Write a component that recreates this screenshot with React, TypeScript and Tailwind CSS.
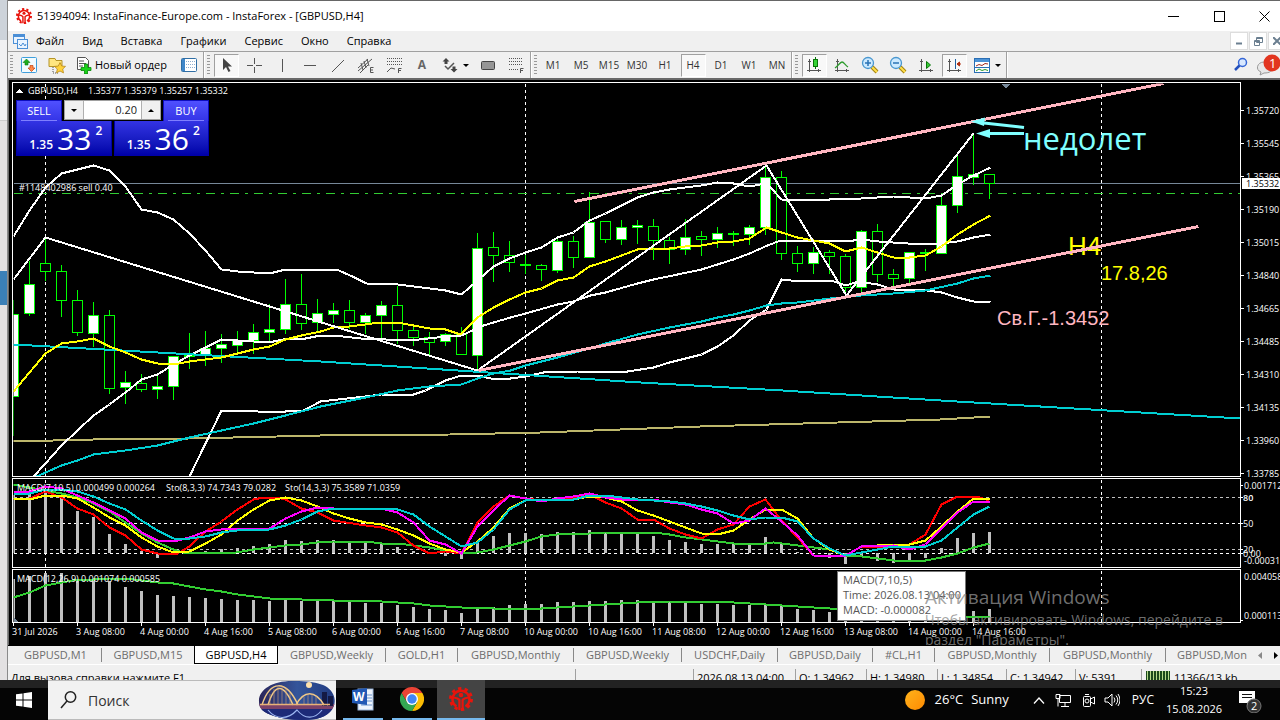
import React from "react";

type Pt = [number, number];

const UI = "font-['Open_Sans','Noto_Sans',sans-serif]";

/* open/close box top, bottom, wick high, low, style: 1 = filled, 0 = hollow */
const candles: [number, number, number, number, number][] = [
  [314, 396, 299, 435, 1], [284, 313, 260, 315, 1], [263, 271, 237, 280, 0], [271, 300, 264, 316, 0],
  [300, 332, 289, 335, 0], [315, 333, 301, 346, 1], [315, 388, 309, 393, 0], [382, 387, 370, 403, 1],
  [383, 389, 373, 391, 0], [386, 389, 375, 398, 1], [356, 386, 356, 399, 1], [355, 356, 332, 368, 0],
  [348, 354, 330, 365, 1], [344, 348, 333, 362, 1], [340, 345, 330, 353, 1], [332, 340, 323, 353, 1],
  [329, 332, 303, 340, 1], [304, 329, 278, 333, 1], [304, 323, 273, 329, 0], [313, 322, 298, 330, 1],
  [310, 314, 302, 322, 1], [310, 322, 299, 328, 0], [315, 322, 312, 333, 1], [305, 315, 300, 338, 1],
  [305, 330, 285, 343, 0], [330, 337, 325, 345, 0], [337, 342, 331, 354, 0], [334, 341, 332, 345, 1],
  [334, 354, 326, 354, 0], [248, 355, 232, 370, 1], [247, 255, 231, 281, 0], [255, 262, 240, 271, 0],
  [264, 265, 254, 273, 0], [265, 269, 263, 280, 0], [241, 270, 237, 272, 1], [241, 257, 235, 267, 0],
  [222, 257, 191, 257, 1], [221, 239, 220, 242, 0], [227, 239, 219, 244, 1], [225, 227, 219, 243, 1],
  [226, 240, 218, 259, 0], [240, 249, 236, 263, 0], [237, 249, 218, 254, 1], [236, 239, 230, 255, 0],
  [233, 239, 226, 247, 1], [233, 234, 230, 245, 0], [227, 234, 224, 244, 1], [177, 227, 165, 234, 1],
  [177, 253, 170, 259, 0], [253, 263, 245, 271, 0], [252, 263, 246, 273, 1], [252, 256, 249, 273, 0],
  [256, 287, 253, 295, 0], [231, 287, 229, 292, 1], [231, 274, 223, 281, 0], [274, 278, 268, 287, 0],
  [252, 278, 251, 282, 1], [252, 253, 248, 270, 0], [205, 253, 193, 253, 1], [176, 205, 154, 212, 1],
  [174, 177, 133, 184, 1], [174, 183, 174, 198, 0],
];

const upperBand: Pt[] = [[13, 236], [29, 210], [45, 187], [61, 173], [93, 165], [109, 170], [125, 186], [141, 209], [157, 212], [173, 219], [189, 233], [205, 250], [221, 269], [237, 271], [253, 272], [273, 272], [285, 269], [336, 269], [352, 276], [366, 283], [397, 284], [429, 288], [445, 290], [461, 294], [477, 280], [493, 266], [509, 258], [525, 252], [541, 247], [557, 237], [573, 232], [589, 220], [605, 213], [621, 205], [637, 197], [653, 192], [669, 189], [685, 187], [701, 185], [717, 182], [733, 183], [749, 186], [765, 183], [771, 188], [781, 199], [829, 199], [861, 198], [877, 197], [893, 196], [909, 197], [925, 198], [941, 195], [957, 184], [973, 175], [990, 167]];
const middleBand: Pt[] = [[33, 476], [45, 463], [61, 445], [93, 415], [109, 404], [125, 392], [141, 379], [157, 374], [173, 364], [189, 355], [221, 339], [253, 341], [273, 341], [287, 338], [305, 338], [320, 335], [333, 335], [360, 338], [410, 340], [445, 336], [461, 335], [483, 325], [510, 317], [525, 313], [557, 304], [573, 301], [590, 295], [605, 292], [637, 283], [653, 279], [701, 269], [733, 259], [749, 253], [767, 245], [780, 240], [853, 240], [861, 239], [878, 241], [907, 243], [941, 243], [957, 241], [973, 237], [990, 234]];
const lowerBand: Pt[] = [[189, 476], [221, 410], [250, 410], [257, 411], [285, 411], [303, 410], [320, 401], [365, 396], [381, 394], [413, 394], [425, 390], [445, 380], [461, 375], [478, 375], [490, 378], [510, 378], [525, 376], [543, 372], [577, 371], [627, 371], [653, 367], [669, 362], [701, 354], [717, 346], [733, 335], [749, 320], [766, 309], [781, 279], [790, 280], [830, 280], [846, 285], [857, 281], [877, 284], [893, 289], [927, 290], [941, 292], [957, 297], [973, 301], [990, 302]];
const zigzag: Pt[] = [[13, 279], [45, 237], [477, 370], [766, 165], [846, 295], [973, 133]];
const yellowMa: Pt[] = [[13, 391], [45, 353], [61, 343], [77, 341], [93, 338], [109, 346], [125, 352], [141, 359], [157, 363], [173, 364], [189, 361], [221, 357], [237, 353], [253, 349], [269, 346], [285, 339], [301, 335], [320, 331], [333, 327], [349, 326], [365, 324], [378, 322], [397, 322], [429, 328], [445, 329], [460, 334], [477, 317], [493, 307], [509, 299], [525, 292], [541, 288], [557, 280], [573, 277], [589, 266], [605, 261], [621, 255], [637, 249], [653, 248], [669, 248], [685, 246], [701, 245], [717, 242], [733, 241], [749, 238], [766, 227], [781, 232], [797, 237], [813, 240], [829, 243], [845, 251], [861, 247], [877, 252], [893, 257], [909, 257], [925, 255], [941, 246], [957, 234], [973, 224], [990, 215]];
const cyanMa: Pt[] = [[36, 476], [61, 465], [77, 460], [93, 454], [125, 450], [157, 445], [189, 437], [221, 430], [253, 423], [285, 415], [320, 406], [365, 397], [397, 390], [429, 386], [461, 384], [477, 378], [493, 373], [510, 370], [525, 365], [557, 357], [589, 348], [605, 343], [637, 334], [669, 327], [701, 321], [717, 317], [733, 314], [749, 310], [766, 305], [781, 303], [797, 302], [830, 298], [861, 295], [893, 293], [925, 290], [957, 283], [973, 278], [990, 275]];
const longCyan: Pt[] = [[13, 344], [320, 361], [640, 382], [782, 390], [940, 400], [1240, 418]];
const khaki: Pt[] = [[13, 441], [93, 439], [189, 438], [320, 435], [450, 434], [540, 432], [700, 426], [940, 419], [990, 416]];

const macdBars = [495, 494, 490, 497, 511, 517, 534, 544, 551, 558, 555, 552, 551, 549, 548, 546, 544, 540, 541, 540, 540, 543, 543, 543, 547, 551, 552, 556, 559, 543, 536, 533, 533, 534, 532, 532, 530, 533, 533, 533, 536, 540, 542, 544, 544, 544, 545, 537, 544, 552, 553, 558, 564, 557, 561, 563, 560, 558, 548, 538, 533, 532];
const macd2Bars = [579, 576, 573, 573, 579, 580, 581, 587, 591, 595, 596, 597, 598, 599, 600, 600, 601, 600, 601, 601, 601, 602, 603, 603, 605, 607, 609, 610, 613, 609, 607, 605, 604, 604, 602, 602, 601, 601, 600, 600, 602, 601, 603, 604, 604, 605, 605, 604, 606, 609, 610, 612, 614, 616, 617, 618, 618, 618, 616, 613, 611, 609];
const greenSignal: Pt[] = [[13, 484], [29, 487], [45, 490], [61, 493], [77, 497], [93, 503], [109, 511], [125, 522], [141, 533], [157, 542], [173, 549], [182, 552], [230, 553], [253, 549], [269, 547], [285, 545], [301, 544], [317, 542], [333, 541], [366, 541], [381, 543], [397, 543], [413, 545], [429, 547], [445, 550], [461, 553], [477, 552], [493, 549], [509, 545], [525, 541], [541, 536], [557, 534], [589, 533], [605, 532], [653, 532], [669, 534], [685, 537], [701, 539], [717, 541], [733, 543], [765, 543], [773, 542], [781, 543], [797, 545], [813, 547], [829, 549], [845, 555], [861, 556], [877, 558], [893, 560], [925, 560], [941, 557], [957, 553], [973, 547], [989, 543]];
const red: Pt[] = [[13, 498], [29, 498], [45, 491], [61, 497], [77, 508], [93, 514], [109, 527], [125, 535], [141, 549], [157, 553], [177, 553], [189, 546], [205, 531], [221, 521], [237, 509], [253, 499], [263, 497], [277, 497], [285, 499], [301, 508], [317, 512], [333, 520], [365, 525], [381, 527], [397, 532], [413, 545], [429, 553], [445, 551], [461, 553], [477, 522], [493, 506], [509, 495], [525, 498], [541, 500], [573, 497], [589, 494], [605, 502], [621, 508], [637, 519], [653, 519], [669, 528], [685, 534], [701, 538], [717, 529], [733, 524], [749, 506], [765, 499], [781, 520], [797, 537], [813, 555], [845, 555], [861, 546], [883, 546], [889, 544], [909, 544], [925, 534], [941, 504], [957, 496], [976, 496], [989, 500]];
const yellow: Pt[] = [[13, 498], [29, 499], [45, 495], [61, 495], [77, 498], [93, 507], [109, 517], [125, 525], [141, 537], [157, 546], [173, 552], [189, 551], [205, 543], [221, 534], [237, 520], [253, 509], [269, 500], [285, 497], [301, 500], [317, 506], [333, 513], [349, 518], [365, 522], [381, 524], [397, 529], [413, 535], [429, 543], [445, 549], [461, 552], [477, 541], [493, 527], [509, 508], [525, 500], [541, 499], [573, 499], [589, 496], [605, 497], [621, 501], [637, 510], [653, 515], [669, 521], [685, 527], [701, 533], [717, 534], [733, 530], [749, 519], [765, 509], [781, 509], [797, 518], [813, 538], [829, 549], [845, 555], [861, 546], [893, 544], [909, 544], [925, 540], [941, 526], [957, 511], [973, 498], [989, 498]];
const magenta: Pt[] = [[13, 491], [29, 491], [45, 486], [61, 488], [77, 495], [93, 502], [109, 510], [125, 518], [141, 532], [157, 540], [173, 541], [189, 537], [205, 531], [221, 529], [269, 528], [285, 518], [301, 511], [317, 507], [333, 508], [381, 508], [397, 512], [413, 522], [429, 540], [445, 544], [461, 553], [477, 526], [493, 510], [509, 495], [525, 498], [541, 501], [557, 498], [573, 496], [589, 493], [605, 497], [621, 499], [653, 499], [669, 502], [685, 504], [701, 509], [717, 513], [733, 523], [749, 520], [765, 508], [781, 521], [797, 535], [813, 555], [845, 555], [861, 546], [893, 545], [909, 549], [925, 544], [941, 528], [957, 512], [973, 501], [989, 501]];
const cyan: Pt[] = [[13, 493], [29, 493], [45, 489], [61, 489], [77, 491], [93, 496], [109, 503], [125, 509], [141, 520], [157, 530], [173, 538], [189, 538], [205, 536], [221, 532], [237, 530], [269, 529], [285, 525], [301, 519], [317, 511], [333, 508], [381, 508], [397, 509], [413, 514], [429, 526], [445, 536], [461, 546], [477, 542], [493, 529], [509, 509], [525, 500], [541, 499], [573, 499], [589, 495], [605, 495], [621, 497], [637, 499], [653, 500], [669, 501], [685, 503], [701, 506], [717, 510], [733, 515], [749, 519], [765, 517], [781, 517], [797, 521], [813, 538], [829, 548], [845, 555], [861, 552], [877, 549], [893, 546], [925, 546], [941, 540], [957, 527], [973, 514], [989, 506]];
const green2: Pt[] = [[13, 597], [29, 592], [45, 585], [61, 582], [77, 579], [93, 579], [109, 578], [125, 578], [141, 580], [157, 582], [173, 583], [189, 586], [205, 589], [221, 591], [237, 594], [253, 596], [269, 598], [301, 599], [333, 600], [381, 601], [397, 602], [413, 603], [429, 605], [445, 606], [461, 607], [493, 608], [541, 608], [557, 607], [573, 606], [589, 605], [605, 604], [621, 603], [637, 602], [669, 601], [701, 601], [733, 602], [749, 603], [781, 605], [797, 606], [813, 607], [829, 608], [861, 611], [893, 614], [941, 616], [989, 616]];

const prices = ["1.35720", "1.35545", "1.35365", "1.35190", "1.35015", "1.34840", "1.34665", "1.34485", "1.34310", "1.34135", "1.33960", "1.33785"];
const times = ["31 Jul 2026", "3 Aug 08:00", "4 Aug 00:00", "4 Aug 16:00", "5 Aug 08:00", "6 Aug 00:00", "6 Aug 16:00", "7 Aug 08:00", "10 Aug 00:00", "10 Aug 16:00", "11 Aug 08:00", "12 Aug 00:00", "12 Aug 16:00", "13 Aug 08:00", "14 Aug 00:00", "14 Aug 16:00"];

function Line({ pts, color, width = 2 }: { pts: Pt[]; color: string; width?: number }) {
  return <polyline points={pts.map((p) => p.join(",")).join(" ")} fill="none" stroke={color} strokeWidth={width} strokeLinejoin="round" />;
}

function Chart() {
  return (
    <svg viewBox="8 80 1272 565" preserveAspectRatio="xMinYMin slice" className="block h-full w-full bg-black" shapeRendering="crispEdges" role="img" aria-label="GBPUSD H4">
      <defs>
        <clipPath id="plot"><rect x="13" y="83" width="1227" height="393" /></clipPath>
        <clipPath id="sub1"><rect x="13" y="479" width="1227" height="88" /></clipPath>
        <clipPath id="sub2"><rect x="13" y="570" width="1227" height="52" /></clipPath>
      </defs>
      <rect x="8" y="80" width="1" height="565" fill="#696969" />
      <g transform="translate(0.5 0.5)">
        <g stroke="#fff" strokeDasharray="3 3">
          {[45, 525, 1101].map((x) => (
            <path key={x} d={`M${x} 83V476M${x} 479V567M${x} 570V622`} />
          ))}
        </g>
        <g clipPath="url(#plot)">
          <path d="M13 183H1240" stroke="#778899" />
          <path d="M13 193H1240" stroke="#32cd32" strokeDasharray="9 6 3 6" />
          {candles.map(([t, b, h, l, filled], i) => {
            const x = 13 + i * 16;
            return (
              <g key={i} stroke="#00ff00">
                <path d={`M${x} ${h}V${t}M${x} ${b}V${l}`} />
                <rect x={x - 5} y={t} width="10" height={b - t} fill={filled ? "#fff" : "#000"} />
              </g>
            );
          })}
          <Line pts={khaki} color="#bdb76b" />
          <Line pts={upperBand} color="#fff" />
          <Line pts={middleBand} color="#fff" />
          <Line pts={lowerBand} color="#fff" />
          <Line pts={cyanMa} color="#00ced1" />
          <Line pts={longCyan} color="#00ced1" />
          <Line pts={yellowMa} color="#ffff00" />
          <Line pts={zigzag} color="#fff" />
          <Line pts={[[574, 201], [1163, 83]]} color="#ffb6c1" width={3} />
          <Line pts={[[478, 370], [1198, 226]]} color="#ffb6c1" width={3} />
          <path d="M1001 83h9l-4.500 5z" fill="#778899" />
        </g>
        <g clipPath="url(#sub1)">
          <path d="M13 497H1240M13 549H1240" stroke="#c0c0c0" strokeDasharray="3 3" />
          <path d="M13 523H1240M13 553H1240" stroke="#fff" strokeDasharray="3 3" />
          {macdBars.map((y, i) => (
            <rect key={i} x={12 + i * 16 - 0.5} y={Math.min(y, 553) - 0.5} width="3" height={Math.abs(553 - y)} fill="#c0c0c0" />
          ))}
          <Line pts={greenSignal} color="#32cd32" />
          <Line pts={red} color="#ff0000" />
          <Line pts={yellow} color="#ffff00" />
          <Line pts={magenta} color="#ff00ff" />
          <Line pts={cyan} color="#00ced1" />
        </g>
        <g clipPath="url(#sub2)">
          {macd2Bars.map((y, i) => (
            <rect key={i} x={12 + i * 16 - 0.5} y={y - 0.5} width="3" height={622 - y} fill="#c0c0c0" />
          ))}
          <Line pts={green2} color="#32cd32" />
          <path d="M13 617v5h5z" fill="#778899" />
        </g>
        <g fill="none" stroke="#fff">
          <path d="M12 82H1240V476H12zM12 478H1240V567H12zM12 569H1240V622H12z" />
          {prices.map((p, i) => <path key={p} d={`M1240 ${110 + i * 33}h3`} />)}
          {times.map((t, i) => <path key={t} d={`M${13 + i * 64} 622v3`} />)}
          <path d="M1240 485h2M1240 497h2M1240 523h2M1240 549h2M1240 553h2M1240 620h2" />
        </g>
      </g>
      <g fill="#7fffff" stroke="#7fffff" shapeRendering="auto">
        <path d="M1024 127.500L984 123" strokeWidth="3" />
        <path d="M971 121.500L985 117.500L984 126z" stroke="none" />
        <path d="M1024 133.500H988" strokeWidth="3" />
        <path d="M976 133.500L990 129V138z" stroke="none" />
      </g>
      <g className="font-['Open_Sans','Noto_Sans',sans-serif] text-[9px] font-medium" fill="#fff">
        {prices.map((p, i) => <text key={p} x="1246" y={114 + i * 33}>{p}</text>)}
        <rect x="1242" y="178" width="38" height="11" />
        <text x="1246" y="187" fill="#000">1.35332</text>
        {times.map((t, i) => <text key={t} x={12 + i * 64} y="635">{t}</text>)}
        <path d="M16 93h7l-3.500 -4z" />
        <text x="28" y="94">GBPUSD,H4</text>
        <text x="88" y="94">1.35377 1.35379 1.35257 1.35332</text>
        <text x="19" y="191">#1148402986 sell 0.40</text>
        <text x="17" y="491">MACD(7,10,5) 0.000499 0.000264</text>
        <text x="166" y="491">Sto(8,3,3) 74.7343 79.0282</text>
        <text x="285" y="491">Sto(14,3,3) 75.3589 71.0359</text>
        <text x="17" y="582">MACD(12,26,9) 0.001074 0.000585</text>
        <text x="1244" y="489">0.001712</text>
        <text x="1243" y="501" className="font-semibold">80</text>
        <text x="1243" y="527">50</text>
        <text x="1243" y="553">20</text>
        <text x="1243" y="557">0.00</text>
        <text x="1244" y="564">-0.000315</text>
        <text x="1244" y="580">0.004058</text>
        <text x="1244" y="619">0.000113</text>
      </g>
      <text x="1023" y="150" fill="#7fffff" className="font-['Open_Sans','Noto_Sans',sans-serif] text-[31px]">недолет</text>
      <g className="font-['Liberation_Sans',sans-serif]">
        <text x="1068" y="255" fill="#ffff00" className="text-[26px]">H4</text>
        <text x="1101" y="280" fill="#ffff00" className="text-[20px]">17.8,26</text>
        <text x="997" y="325" fill="#ffb6c1" className="text-[20px]">Св.Г.-1.3452</text>
      </g>
      <path d="M1067 253L1104 245.500" stroke="#ffb6c1" strokeWidth="3" />
    </svg>
  );
}

function TradePanel() {
  return (
    <div className="absolute top-5 left-2 flex flex-col text-white">
      <div className="flex h-[21px] w-[193px] justify-between">
        <button className="w-[46px] border border-b-0 border-[#0d0dc0] bg-gradient-to-b from-[#5050ff] to-[#3434e6] px-1 text-[11px] leading-[18px]"><span className="block border-b border-[#7f7fff]">SELL</span></button>
        <div className="flex h-5 w-[97px] border border-[#a0a0a0] bg-[#f0f0f0]">
          <button aria-label="Decrease volume" className="flex w-[18px] items-center justify-center"><svg width="6" height="3"><path d="M0 0h6L3 3z" fill="#000" /></svg></button>
          <input aria-label="Volume" defaultValue="0.20" className="w-0 min-w-0 flex-1 border-x border-[#b0b0b0] bg-white pr-1 text-right text-[11px] leading-4 text-[#222]" />
          <button aria-label="Increase volume" className="flex w-[18px] items-center justify-center"><svg width="6" height="3"><path d="M0 3h6L3 0z" fill="#000" /></svg></button>
        </div>
        <button className="w-[46px] border border-b-0 border-[#0d0dc0] bg-gradient-to-b from-[#5050ff] to-[#3434e6] px-1 text-[11px] leading-[18px]"><span className="block border-b border-[#7f7fff]">BUY</span></button>
      </div>
      <div className="flex h-[35px] w-[193px] gap-0.5">
        {["33", "36"].map((big) => (
          <div key={big} className="flex flex-1 items-end justify-center gap-1 border border-t-0 border-[#0000a8] bg-gradient-to-b from-[#3333e4] to-[#0000a8] pl-1">
            <span className="pb-0.5 text-[12px] leading-4 font-semibold">1.35</span>
            <span className="text-[30px] leading-8">{big}</span>
            <span className="self-start pt-0.5 text-[12px] leading-4 font-semibold">2</span>
          </div>
        ))}
      </div>
    </div>
  );
}

function BrandIcon({ className }: { className: string }) {
  return (
    <svg viewBox="0 0 24 24" className={className} fill="none" stroke="#e8140c" aria-hidden="true">
      <circle cx="12" cy="12" r="10.500" strokeWidth="3" strokeDasharray="3.300 3.297" />
      <path d="M7.500 19.500A8.500 8.500 0 1 1 16.500 19.500" strokeWidth="2.400" />
      <circle cx="12" cy="8" r="2.300" fill="#e8140c" stroke="none" />
      <path d="M4.500 10.500Q9 11 10.400 13V23M19.500 10.500Q15 11 13.600 13V23" strokeWidth="2.200" />
    </svg>
  );
}

function Grip() {
  return <span className="mx-0.5 h-[20px] w-[3px] shrink-0 bg-[repeating-linear-gradient(to_bottom,#999_0_1px,#f0f0f0_1px_3px)]" />;
}
function Sep() {
  return <span className="h-full w-0.5 shrink-0 border-l border-[#a0a0a0] bg-white" />;
}
function Tool({ label, active, children, wide }: { label: string; active?: boolean; wide?: boolean; children: React.ReactNode }) {
  return (
    <button aria-label={label} className={`flex h-6 shrink-0 items-center justify-center p-px ${wide ? "w-[38px]" : "w-7"}`}>
      <span className={active ? "flex h-[23px] w-[25px] items-center justify-center border border-t-[#a0a0a0] border-r-white border-b-white border-l-[#a0a0a0] bg-[#f8f8f8]" : "flex items-center justify-center gap-1"}>
        {children}
      </span>
    </button>
  );
}
function I({ children, s = "#555" }: { children: React.ReactNode; s?: string }) {
  return <svg width="18" height="18" viewBox="0 0 18 18" fill="none" stroke={s} strokeWidth="1" aria-hidden="true">{children}</svg>;
}
const Caret = () => <svg width="6" height="3" aria-hidden="true"><path d="M0 0h6L3 3z" fill="#000" /></svg>;
const Axes = () => <path d="M4.500 3V16M2 14.500H16M3 5.500h3M13.500 13v3" stroke="#555" />;

function Magnifier({ plus }: { plus: boolean }) {
  return (
    <I>
      <path d="M11 11l5 5" stroke="#a5830f" strokeWidth="4" />
      <path d="M11 11l5 5" stroke="#ffdf4a" strokeWidth="2" />
      <circle cx="7" cy="7" r="5.500" fill="#cdeaff" stroke="#4a97cf" strokeWidth="1.300" />
      <path d={plus ? "M4 7h6M7 4v6" : "M4 7h6"} stroke="#2a73b5" strokeWidth="1.500" />
    </I>
  );
}

function Toolbar() {
  return (
    <div className="flex h-[29px] shrink-0 items-center border-t border-[#a0a0a0] border-b-2 border-b-[#696969] bg-[#f0f0f0]">
      <Grip />
      <Tool label="Обзор рынка">
        <I><rect x="1.500" y="1.500" width="15" height="15" rx="1" fill="#f2fbff" stroke="#3f9fdc" /><path d="M6.500 3l3.500 3.500H8v2.500H5V6.500H3z" fill="#1fae1f" stroke="#0b780b" strokeWidth=".6" /><path d="M11.500 15.500L8 12h2V9.500h3V12h2z" fill="#ff8a4a" stroke="#c4400c" strokeWidth=".7" /></I>
      </Tool>
      <Tool label="Избранное">
        <I><path d="M1 2.500h6l1 2h6v6H1z" fill="#ffe680" stroke="#b59428" /><path d="M5 11v6h5" strokeDasharray="1 1" /><path d="M12 6.500l1.700 3.500 3.800.4-2.800 2.600.8 3.900L12 15l-3.500 1.900.8-3.900L6.500 10.400l3.800-.4z" fill="#ffd23c" stroke="#b8891a" strokeWidth=".8" /></I>
      </Tool>
      <button className="flex h-6 w-[104px] shrink-0 items-center gap-0.5 pl-1 text-[11px] whitespace-nowrap">
        <I><path d="M2.500 1.500h8l3 3v9h-11z" fill="#fff" stroke="#555" /><path d="M4 5h5M4 7.500h7M4 10h4" /><path d="M9.500 8h3v3.500H16v3h-3.500V18h-3v-3.500H6v-3h3.500z" fill="#19d219" stroke="#078607" strokeWidth=".8" /></I>
        Новый ордер
      </button>
      <Tool label="Навигатор"><I><rect x="1.500" y="2.500" width="15" height="13" rx="1" fill="#fff" stroke="#2f6ea5" /><path d="M2 3h3v12H2z" fill="#3f86c8" stroke="none" /><path d="M6 5.500h9M6 8.500h9M6 11.500h9" stroke="#8eaed0" strokeDasharray="1 1" /></I></Tool>
      <Sep />
      <Grip />
      <Tool label="Курсор" active><I><path d="M6 2v12l3-3 2.500 5 2-1L11 10.500h4z" fill="#444" stroke="none" /></I></Tool>
      <Tool label="Перекрестие"><I><path d="M9.500 2v6M9.500 11v6M2 9.500h6M11 9.500h6" /></I></Tool>
      <Tool label="Вертикальная линия"><I><path d="M9.500 3v13" /></I></Tool>
      <Tool label="Горизонтальная линия"><I><path d="M3 9.500h12" /></I></Tool>
      <Tool label="Трендовая линия"><I><path d="M3 16L15 4" /></I></Tool>
      <Tool label="Канал"><I><path d="M1 12l10-9M1 15L15 3M3 17l8-8M4 7l2 7M7 5l2 7M10 3l2 7" /><path d="M16.500 11.500h-3v5h3M13.500 14h2.500" /></I></Tool>
      <Tool label="Фибоначчи"><I><path d="M2 2.500h15M2 5.500h15M2 8.500h15" strokeDasharray="1 1" /><path d="M2 16l4-4 4 1" /><path d="M16.500 12.500h-3V17M13.500 14.500h2.500" /></I></Tool>
      <Tool label="Текст"><span className="text-[12px] font-bold text-[#666]">A</span></Tool>
      <Tool label="Стрелки" wide>
        <I><path d="M5 2l3.500 3.500H6.500V8h-3V5.500H1.500zM13 16.500L9.500 13h2v-2.500h3V13h2z" fill="#444" stroke="none" /><path d="M4 10l3 3 6-6" strokeWidth="1.500" /></I>
        <Caret />
      </Tool>
      <Tool label="Прямоугольник"><I><rect x="2.500" y="5.500" width="13" height="8" rx="1" fill="#969696" stroke="#444" /></I></Tool>
      <Tool label="Сетка"><I><path d="M2 2.500h14M2 5.500h14M2 8.500h14M2 13.500h9" strokeDasharray="1 1" /><path d="M16.500 12.500h-3V17M13.500 14.500h2.500" /></I></Tool>
      <Sep />
      <Grip />
      {["M1", "M5", "M15", "M30", "H1", "H4", "D1", "W1", "MN"].map((p) => (
        <Tool key={p} label={p} active={p === "H4"}><span className="text-[10px] text-[#333]">{p}</span></Tool>
      ))}
      <Sep />
      <Grip />
      <Tool label="Свечи" active><I><Axes /><path d="M10.500 1v12" stroke="#087508" /><rect x="8.500" y="3.500" width="4" height="7" fill="#35d335" stroke="#087508" /></I></Tool>
      <Tool label="Линия"><I><Axes /><path d="M2 12c3-2 5-6 7-6s3 3 6 5" stroke="#2e9c2e" strokeWidth="1.300" /></I></Tool>
      <Tool label="Увеличить"><Magnifier plus /></Tool>
      <Tool label="Уменьшить"><Magnifier plus={false} /></Tool>
      <Tool label="Автопрокрутка"><I><Axes /><path d="M9.500 5.500v7l4-3.500z" fill="#35c835" stroke="#087508" /></I></Tool>
      <Tool label="Сдвиг" active><I><Axes /><path d="M10.500 3v10" stroke="#1f5f9f" /><path d="M12 8h4M12 8l2.500-2v4z" stroke="#b03010" fill="#b03010" /></I></Tool>
      <Tool label="Шаблоны" wide>
        <I><rect x="1.500" y="2.500" width="15" height="14" fill="#fff" stroke="#2a6eb4" /><path d="M2 3h14v3H2z" fill="#4b92d6" stroke="none" /><path d="M2 11.500h14" stroke="#2a6eb4" /><path d="M3 10l3-1.500 3 1 3-2 3 .5" stroke="#a02a20" /><path d="M3 15l3-2 3 1.500 3-1 3 1" stroke="#2a9a2a" /></I>
        <Caret />
      </Tool>
      <Sep />
      <span className="flex-1" />
      <Tool label="Поиск"><I><circle cx="11.500" cy="6.500" r="4" fill="#d8e8ff" stroke="#3566d6" strokeWidth="1.500" /><path d="M8.500 9.500L4 14" stroke="#2450bd" strokeWidth="2.500" /></I></Tool>
      <button aria-label="Уведомления" className="flex h-6 w-[26px] shrink-0 items-center">
        <svg width="26" height="24" viewBox="0 0 26 24" aria-hidden="true"><path d="M10 9c-7 0-9 8-3 10l-1 3 4-2c6 0 8-2 8-5" fill="#e8e8e8" stroke="#999" /><circle cx="18" cy="10" r="8.500" fill="#e2351f" /><text x="15" y="15" fill="#fff" className="text-[13px]">1</text></svg>
      </button>
    </div>
  );
}

const tabs: [string, string][] = [
  ["GBPUSD,M1", "w-[92px]"], ["GBPUSD,M15", "w-[92px]"], ["GBPUSD,H4", "w-[84px]"], ["GBPUSD,Weekly", "w-[108px]"], ["GOLD,H1", "w-[72px]"],
  ["GBPUSD,Monthly", "w-[116px]"], ["GBPUSD,Weekly", "w-[108px]"], ["USDCHF,Daily", "w-[96px]"], ["GBPUSD,Daily", "w-[95px]"], ["#CL,H1", "w-[62px]"],
  ["GBPUSD,Monthly", "w-[115px]"], ["GBPUSD,Monthly", "w-[116px]"], ["GBPUSD,Mon", "w-[92px]"],
];

function Tabs() {
  return (
    <div className="flex h-5 shrink-0 overflow-hidden border-t border-b border-t-black border-b-white bg-[#f0f0f0] pl-0.5">
      {tabs.map(([t, w], i) => (
        <button key={i} className={`${w} flex h-[18px] shrink-0 items-center text-[11px] whitespace-nowrap ${i === 2 ? "border-x border-b border-black bg-white text-black" : "text-[#6d6d6d]"}`}>
          <span className={`w-full leading-[14px] ${i === 1 || i === 2 || i === 12 ? "" : "border-r border-[#888]"}`}>{t}</span>
        </button>
      ))}
      <span className="flex flex-1 items-center justify-end gap-3 pr-1">
        <svg width="4" height="7"><path d="M4 0v7L0 3.500z" fill="#888" /></svg>
        <svg width="4" height="7"><path d="M0 0v7l4-3.500z" fill="#000" /></svg>
      </span>
    </div>
  );
}

const status: [string, string][] = [["2026.08.13 04:00", "w-[102px]"], ["O: 1.34962", "w-[71px]"], ["H: 1.34980", "w-[71px]"], ["L: 1.34854", "w-[69px]"], ["C: 1.34942", "w-[69px]"], ["V: 5391", "w-[66px]"]];

function StatusBar() {
  return (
    <div className="flex h-[15px] shrink-0 items-start overflow-hidden bg-[#f0f0f0] pt-1 pl-[3px] text-[11px] leading-[17px] whitespace-nowrap">
      <span className="min-w-0 flex-1">Для вызова справки нажмите F1</span>
      <span className="h-4 w-[118px] border-l border-[#a0a0a0]" />
      {status.map(([t, w]) => <span key={t} className={`${w} h-4 border-l border-[#a0a0a0] pl-[3px]`}>{t}</span>)}
      <span className="flex w-[139px] border-l border-[#a0a0a0] pl-1">
        <svg width="24" height="12" className="mt-0.5 mr-1 bg-[#1c4a1c]"><path d="M1.500 0v12M4.500 0v12M7.500 0v12M10.500 0v12M13.500 0v12M16.500 0v12M19.500 0v12M22.500 0v12" stroke="#b5d98a" /></svg>
        11366/13 kb
      </span>
    </div>
  );
}

function BridgeArt() {
  return (
    <svg viewBox="0 0 78 40" className="h-10 w-[78px]" aria-hidden="true">
      <defs>
        <linearGradient id="sky" x1="0" x2="1"><stop offset="0" stopColor="#2a2458" /><stop offset=".5" stopColor="#34559a" /><stop offset="1" stopColor="#203a80" /></linearGradient>
        <clipPath id="blob"><path d="M1 22C0 10 14 1 34 1S70 3 75 14c5 10-1 22-17 25-14 2-30 1-42-3C6 33 1 29 1 22z" /></clipPath>
      </defs>
      <g clipPath="url(#blob)" fill="none">
        <rect width="78" height="40" fill="url(#sky)" />
        <path d="M0 24h78v5H0z" fill="#7b4268" /><path d="M0 29h78v11H0z" fill="#1d2a78" />
        <path d="M64 12h5v14h-5zM70 16h5v10h-5z" fill="#141a45" />
        <path d="M4 25C12 0 28-1 40 25M38 25c8-15 19-15 28 0M10 25C17 2 26 4 35 25" stroke="#f0c987" strokeWidth="1.500" />
        <path d="M12 14v11M16 9v16M20 7v18M24 6v19M28 8v17M32 13v12M46 17v8M50 14v11M54 14v11M58 16v9" stroke="#cf9f78" strokeWidth=".6" />
        <path d="M2 24.500h70" stroke="#e9b277" strokeWidth="1.500" />
        <path d="M10 30c8 10 20 10 29 0 8 10 18 9 25 0" stroke="#9bb4f0" strokeWidth="1.200" />
        <circle cx="51" cy="5" r="3" fill="#ffe2ad" />
      </g>
    </svg>
  );
}

function Taskbar() {
  return (
    <div className="flex h-10 shrink-0 items-stretch bg-black bg-[linear-gradient(to_bottom,#222_0_8px,#050505_8px)] text-white">
      <button aria-label="Пуск" className="flex w-10 items-center justify-center pl-2">
        <svg width="16" height="16" viewBox="0 0 16 16" fill="#fff"><path d="M0 2.300L6.500 1.400V7.500H0zM7.500 1.200L16 0V7.500H7.500zM0 8.500H6.500V14.600L0 13.700zM7.500 8.500H16V16L7.500 14.800z" /></svg>
      </button>
      <label className="ml-2 flex w-[288px] items-center border-y border-[#bbb] bg-[#f2f2f2] pl-3 text-[#333]">
        <svg width="17" height="20" viewBox="0 0 17 20" fill="none" stroke="#222" strokeWidth="1.500"><circle cx="10.500" cy="7" r="5.200" /><path d="M7 11L1 18" /></svg>
        <input aria-label="Поиск" placeholder="Поиск" className="ml-[11px] w-0 min-w-0 flex-1 text-[14px] placeholder:text-[#333]" />
        <BridgeArt />
      </label>
      <button aria-label="Word" className="ml-[7px] flex w-10 items-center justify-center border-b-2 border-[#76b9ed]">
        <svg width="22" height="24" viewBox="0 0 22 24" aria-hidden="true"><rect x="6" y="2" width="15" height="21" fill="#eef4fc" stroke="#9db8dc" /><path d="M15 8h5M15 11h5M15 14h5M9 18h11" stroke="#6b93cc" /><path d="M0 3l15-2v17L0 16z" fill="#2259b5" /><text x="1" y="14" fill="#fff" className="text-[12px] font-bold">W</text></svg>
      </button>
      <button aria-label="Chrome" className="ml-[9px] flex w-10 items-center justify-center border-b-2 border-[#76b9ed]">
        <svg width="24" height="24" viewBox="0 0 24 24" aria-hidden="true"><path d="M12 6h10.400A12 12 0 0 0 1.600 6L6.800 15z" fill="#ea4335" /><path d="M17.200 15L12 24A12 12 0 0 0 22.400 6H12z" fill="#fbbc04" /><path d="M6.800 15L1.600 6A12 12 0 0 0 12 24l5.200-9z" fill="#34a853" /><circle cx="12" cy="12" r="6" fill="#fff" /><circle cx="12" cy="12" r="4.700" fill="#4285f4" /></svg>
      </button>
      <button aria-label="InstaForex" className="ml-[5px] flex w-12 items-center justify-center border-b-2 border-[#76b9ed] bg-[#444]"><BrandIcon className="size-6" /></button>
      <span className="flex-1" />
      <button className="flex items-center gap-2.5 text-[13px]"><span className="size-5 rounded-full bg-gradient-to-br from-[#ffb31a] to-[#ff8a00]" /><span className="flex gap-2"><span>26°C</span><span>Sunny</span></span></button>
      <div className="ml-6 flex items-center gap-2">
        <svg width="12" height="7" fill="none" stroke="#fff" strokeWidth="1.300"><path d="M1 6.500L6 1l5 5.500" /></svg>
        <svg width="17" height="16" viewBox="0 0 17 16" fill="none" stroke="#fff" className="ml-0.5"><path d="M4.500 3.500h11v7h-11zM10 11v3M6 14.500h8M1 2.500h4v4H1zM3 7v7.500" /></svg>
        <svg width="16" height="16" viewBox="0 0 16 16" fill="none" stroke="#fff"><rect x="3.500" y="4.500" width="7" height="10" rx="1" /><path d="M5 2.500h4M10.500 7l4-2v7l-4-2" /><circle cx="7" cy="9" r="2" /></svg>
        <svg width="16" height="16" viewBox="0 0 16 16" fill="none" stroke="#fff"><path d="M1 6h3l4-4v12l-4-4H1zM10 5.500q2 2.500 0 5M12 3.500q3.500 4.500 0 9M14 2q4 6 0 12" /></svg>
        <span className="ml-1 text-[12px]">РУС</span>
      </div>
      <div className="ml-3 flex w-[56px] flex-col items-center justify-center text-[11px] leading-[18px]"><span>15:23</span><span>15.08.2026</span></div>
      <button aria-label="Уведомления" className="ml-3 flex w-[46px] items-center pl-1">
        <svg width="26" height="26" viewBox="0 0 26 26" aria-hidden="true"><path d="M1 4h16v12h-5l-3 3v-3H1z" fill="#fff" /><path d="M4 7.500h10M4 10.500h10" stroke="#111" /><circle cx="16" cy="19" r="7" fill="#333" stroke="#777" /><text x="13" y="23" fill="#fff" className="text-[11px]">2</text></svg>
      </button>
    </div>
  );
}

export default function App() {
  return (
    <div className={`flex h-screen w-full flex-col overflow-hidden bg-[#e3e1e2] text-black ${UI}`}>
      <div className="flex min-h-0 flex-1">
        <div className="flex w-2 shrink-0 flex-col border-r border-[#8a8a8a]">
          <div className="h-10 bg-[#cdd3da]" /><div className="h-20 bg-[#f0f0f2]" /><div className="h-[151px] border-t border-[#ccc]" /><div className="h-[34px] bg-[#3b80b8]" />
        </div>
        <div className="flex min-w-0 flex-1 flex-col border-t border-[#666]">
          <header className="flex h-[30px] shrink-0 items-center bg-white pl-2">
            <BrandIcon className="size-4" />
            <h1 className="ml-[5px] flex-1 text-[11px] whitespace-nowrap">51394094: InstaFinance-Europe.com - InstaForex - [GBPUSD,H4]</h1>
            <button aria-label="Свернуть" className="flex w-[46px] justify-center"><svg width="11" height="11"><path d="M0 5.500h11" stroke="#000" /></svg></button>
            <button aria-label="Развернуть" className="flex w-[46px] justify-center"><svg width="11" height="11"><rect x=".5" y=".5" width="10" height="10" fill="none" stroke="#000" /></svg></button>
            <button aria-label="Закрыть" className="flex w-[38px] justify-center pl-1.5"><svg width="11" height="11"><path d="M.5.5l10 10M10.500.5l-10 10" stroke="#000" /></svg></button>
          </header>
          <nav className="flex h-5 shrink-0 items-center gap-[18px] overflow-hidden bg-[#f0f0f0] pl-[5px] text-[11px]">
            <svg width="15" height="15" viewBox="0 0 15 15" fill="#eaf4ff" stroke="#4b8fd6" className="-mr-2.5"><rect x=".5" y=".5" width="11" height="9" /><path d="M1 2h11" strokeWidth="2" /><rect x="4.500" y="5.500" width="10" height="9" /><path d="M6 10l2 2 2-3 2 3 1-2" fill="none" /></svg>
            {["Файл", "Вид", "Вставка", "Графики", "Сервис", "Окно", "Справка"].map((m) => <button key={m} className="whitespace-nowrap">{m}</button>)}
            <span className="ml-auto flex gap-px">
              <button aria-label="Свернуть окно" className="flex size-[18px] items-center justify-center border border-[#ddd] bg-white"><svg width="8" height="8"><path d="M1 6.500h6" stroke="#6b7f90" strokeWidth="2" /></svg></button>
              <button aria-label="Восстановить окно" className="flex size-[18px] items-center justify-center border border-[#ddd] bg-white"><svg width="9" height="9" fill="#fff" stroke="#6b7f90"><path d="M2.500.5h6v5h-6zM2 1.500h6M.5 3.500h5v5h-5zM.5 4.500h5" /></svg></button>
              <button aria-label="Закрыть окно" className="flex h-[18px] w-3 items-center justify-end border border-r-0 border-[#ddd] bg-white"><svg width="7" height="8"><path d="M0 0l8 8M8 0L0 8" stroke="#6b7f90" strokeWidth="2" /></svg></button>
            </span>
          </nav>
          <Toolbar />
          <main className="relative min-h-0 flex-1 overflow-hidden bg-black">
            <Chart />
            <TradePanel />
            <div role="tooltip" className="absolute top-[491px] left-[829px] h-[50px] w-[129px] border border-[#767676] bg-white pl-[5px] text-[11px] leading-[15px] whitespace-nowrap text-[#575757]">
              MACD(7,10,5)<br />Time: 2026.08.13 04:00<br />MACD: -0.000082
            </div>
            <div className="absolute top-[504px] left-[917px] whitespace-nowrap text-[#8c8c8c]/80">
              <p className="text-[19px] leading-[26px]">Активация Windows</p>
              <p className="text-[14px] leading-5">Чтобы активировать Windows, перейдите в<br />раздел "Параметры".</p>
            </div>
          </main>
          <Tabs />
          <StatusBar />
        </div>
      </div>
      <Taskbar />
    </div>
  );
}
